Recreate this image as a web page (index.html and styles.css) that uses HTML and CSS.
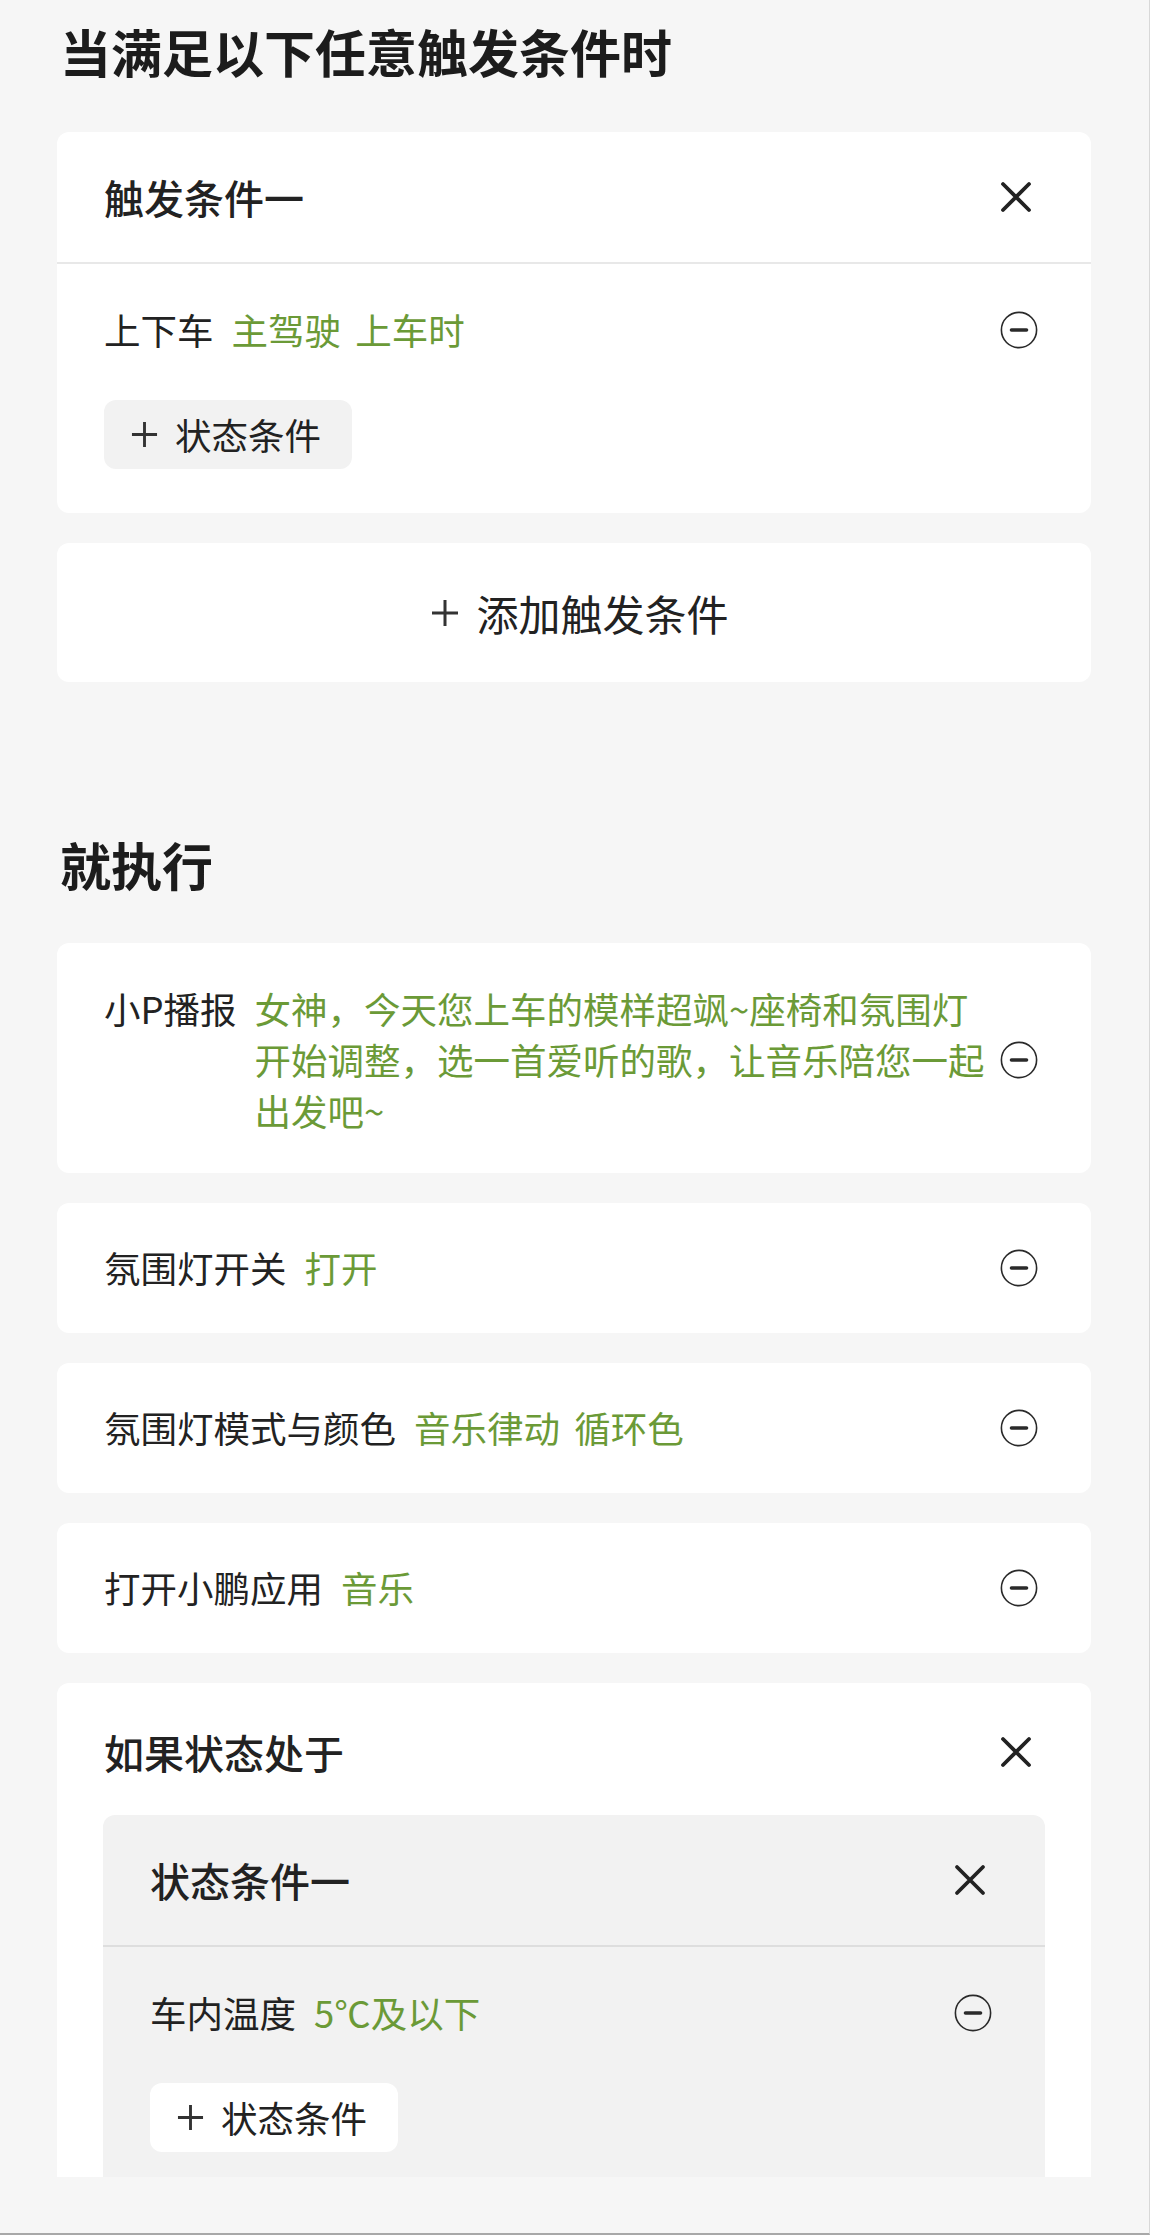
FILE: index.html
```html
<!DOCTYPE html>
<html lang="zh-CN">
<head>
    <meta charset="UTF-8">
    <meta name="viewport" content="width=device-width, initial-scale=1.0">
    <title>场景编辑</title>
    <link rel="stylesheet" href="styles.css">
</head>
<body>
    <svg class="defs" aria-hidden="true">
        <symbol id="i-close" viewBox="0 0 32 32">
            <path d="M3 3L29 29M29 3L3 29" fill="none" stroke="currentColor" stroke-width="3.8" stroke-linecap="round"/>
        </symbol>
        <symbol id="i-minus" viewBox="0 0 38 38">
            <circle cx="19" cy="19" r="17.6" fill="none" stroke="currentColor" stroke-width="1.6"/>
            <path d="M11.5 19H26.5" fill="none" stroke="currentColor" stroke-width="3.6" stroke-linecap="round"/>
        </symbol>
        <symbol id="i-plus" viewBox="0 0 28 28">
            <path d="M14 1V27M1 14H27" fill="none" stroke="currentColor" stroke-width="3"/>
        </symbol>
    </svg>

    <div class="page">
        <div class="content">
            <h2 class="section-title">当满足以下任意触发条件时</h2>

            <div class="card">
                <div class="card-head">
                    <span>触发条件一</span>
                    <svg class="icon-close"><use href="#i-close"/></svg>
                </div>
                <div class="card-body">
                    <div class="row">
                        <span class="label">上下车</span>
                        <span class="value">主驾驶 上车时</span>
                        <svg class="icon-minus"><use href="#i-minus"/></svg>
                    </div>
                    <button class="add-btn"><svg class="icon-plus"><use href="#i-plus"/></svg>状态条件</button>
                </div>
            </div>

            <div class="card add-card">
                <svg class="icon-plus big"><use href="#i-plus"/></svg>
                <span>添加触发条件</span>
            </div>

            <h2 class="section-title exec">就执行</h2>

            <div class="card action tall">
                <div class="row">
                    <span class="label">小P播报</span>
                    <span class="value">女神，今天您上车的模样超飒~座椅和氛围灯开始调整，选一首爱听的歌，让音乐陪您一起出发吧~</span>
                    <svg class="icon-minus"><use href="#i-minus"/></svg>
                </div>
            </div>

            <div class="card action">
                <div class="row">
                    <span class="label">氛围灯开关</span>
                    <span class="value">打开</span>
                    <svg class="icon-minus"><use href="#i-minus"/></svg>
                </div>
            </div>

            <div class="card action">
                <div class="row">
                    <span class="label">氛围灯模式与颜色</span>
                    <span class="value">音乐律动 循环色</span>
                    <svg class="icon-minus"><use href="#i-minus"/></svg>
                </div>
            </div>

            <div class="card action">
                <div class="row">
                    <span class="label">打开小鹏应用</span>
                    <span class="value">音乐</span>
                    <svg class="icon-minus"><use href="#i-minus"/></svg>
                </div>
            </div>

            <div class="card state-card">
                <div class="card-head plain">
                    <span>如果状态处于</span>
                    <svg class="icon-close"><use href="#i-close"/></svg>
                </div>
                <div class="sub-card">
                    <div class="card-head">
                        <span>状态条件一</span>
                        <svg class="icon-close"><use href="#i-close"/></svg>
                    </div>
                    <div class="card-body">
                        <div class="row">
                            <span class="label">车内温度</span>
                            <span class="value">5℃及以下</span>
                            <svg class="icon-minus"><use href="#i-minus"/></svg>
                        </div>
                        <button class="add-btn"><svg class="icon-plus"><use href="#i-plus"/></svg>状态条件</button>
                    </div>
                </div>
            </div>
        </div>
    </div>
</body>
</html>
```

FILE: styles.css
```css
body {
    margin: 0;
    background-color: #f6f6f6;
    color: #222;
    font-family: "Noto Sans CJK SC", "Noto Sans", sans-serif;
}

.defs {
    position: absolute;
    width: 0;
    height: 0;
    overflow: hidden;
}

.page {
    height: 2235px;
    box-sizing: border-box;
    border-right: 1px solid #d8d8d8;
    border-bottom: 2px solid #a8a8a8;
}

/* scroll area, the last card is cut off at its bottom */
.content {
    height: 2177px;
    overflow: hidden;
    padding: 0 58px 0 57px;
}

.section-title {
    margin: 16px 0 46px 3px;
    font-size: 51px;
    line-height: 70px;
    font-weight: 700;
    color: #1c1c1c;
}

.section-title.exec {
    margin-top: 147px;
    margin-bottom: 44px;
}

.card {
    background-color: #fff;
    border-radius: 12px;
    margin-bottom: 30px;
}

.card-head {
    height: 130px;
    display: flex;
    align-items: center;
    justify-content: space-between;
    padding: 0 59px 0 47px;
    font-size: 40px;
    font-weight: 500;
    border-bottom: 2px solid #e8e8e8;
}

.card-head.plain {
    height: 132px;
    box-sizing: border-box;
    padding-top: 6px;
    border-bottom: none;
}

.card-body {
    padding: 46px 53px 44px 47px;
}

.row {
    display: flex;
    align-items: center;
    font-size: 36.5px;
    line-height: 40px;
}

.row .label {
    flex: none;
    margin-right: 18px;
}

.row .value {
    flex: 1;
    margin-right: 4px;
    color: #6b9a37;
    word-spacing: 6px;
}

.icon-close {
    width: 32px;
    height: 32px;
    flex: none;
    color: #222;
}

.icon-minus {
    width: 38px;
    height: 38px;
    flex: none;
    color: #2a2a2a;
}

.icon-plus {
    width: 27px;
    height: 27px;
    flex: none;
    color: #333;
}

.icon-plus.big {
    width: 28px;
    height: 28px;
}

.add-btn {
    margin-top: 50px;
    display: inline-flex;
    align-items: center;
    gap: 17px;
    height: 69px;
    padding: 0 31px 0 27px;
    border: none;
    border-radius: 12px;
    background-color: #f2f2f2;
    color: #222;
    font-family: inherit;
    font-size: 36.5px;
}

.add-card {
    height: 139px;
    display: flex;
    align-items: center;
    justify-content: center;
    gap: 17px;
    padding-left: 12px;
    font-size: 42px;
}

.card.action {
    height: 130px;
    display: flex;
    flex-direction: column;
    justify-content: center;
    padding: 0 53px 0 47px;
}

.card.action.tall {
    height: auto;
    padding: 40px 53px 37px 47px;
}

.tall .row {
    line-height: 51px;
}

.tall .row .label {
    align-self: flex-start;
}

.state-card {
    padding-bottom: 60px;
}

.sub-card {
    margin: 0 46px;
    background-color: #f2f2f2;
    border-radius: 12px;
}

.sub-card .card-head {
    border-bottom-color: #dedede;
}

.sub-card .add-btn {
    background-color: #fff;
}
```
